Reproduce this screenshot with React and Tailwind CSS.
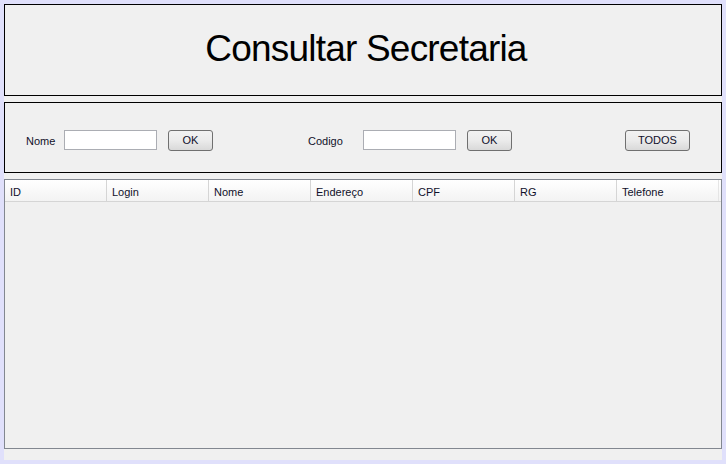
import React from 'react'

const font = { fontFamily: '"Liberation Sans", Arial, sans-serif' }

const columns = ['ID', 'Login', 'Nome', 'Endereço', 'CPF', 'RG', 'Telefone']

const Btn = ({ children, className = '' }) => (
  <button
    className={`h-[21px] rounded-[3px] border border-[#707070] bg-gradient-to-b from-[#f2f2f2] via-[#ebebeb] to-[#d9d9d9] text-[11px] leading-none text-[#10102a] ${className}`}
  >
    {children}
  </button>
)

const Field = ({ className = '' }) => (
  <input
    type="text"
    className={`h-[20px] w-[93px] border border-[#abadb3] bg-white outline-none ${className}`}
  />
)

export default function App() {
  return (
    <div className="h-[464px] w-[726px] bg-[#e0e0fb] p-[4px]" style={font}>
      <div className="flex h-[456px] w-[718px] flex-col bg-[#f0f0f0]">
        {/* Title */}
        <div className="flex h-[92px] items-center justify-center border border-black pb-[2px] pl-[6px]">
          <h1 className="text-[37px] tracking-[-0.8px] text-black">Consultar Secretaria</h1>
        </div>

        {/* Search bar */}
        <div className="mt-[6px] flex h-[71px] items-start border border-black pt-[27px] text-[11px] text-[#10102a]">
          <span className="ml-[21px] mt-[3px] w-[38px]">Nome</span>
          <Field />
          <Btn className="ml-[11px] w-[45px]">OK</Btn>
          <span className="ml-[95px] mt-[3px] w-[55px]">Codigo</span>
          <Field />
          <Btn className="ml-[11px] w-[45px]">OK</Btn>
          <Btn className="ml-[113px] w-[65px]">TODOS</Btn>
        </div>

        {/* Table */}
        <div className="mt-[6px] h-[270px] border border-[#828790] bg-[#f0f0f0]">
          <div className="grid h-[22px] grid-cols-7 border-b border-[#d5d5d5] bg-gradient-to-b from-white to-[#f3f3f3] pr-[2px] text-[11px] text-[#10102a]">
            {columns.map((c, i) => (
              <div
                key={c}
                className={`flex items-center pl-[5px] pt-[3px] ${i < columns.length - 1 ? 'border-r border-[#d5d5d5]' : 'border-r border-[#e5e5e5]'}`}
              >
                {c}
              </div>
            ))}
          </div>
        </div>
      </div>
    </div>
  )
}
